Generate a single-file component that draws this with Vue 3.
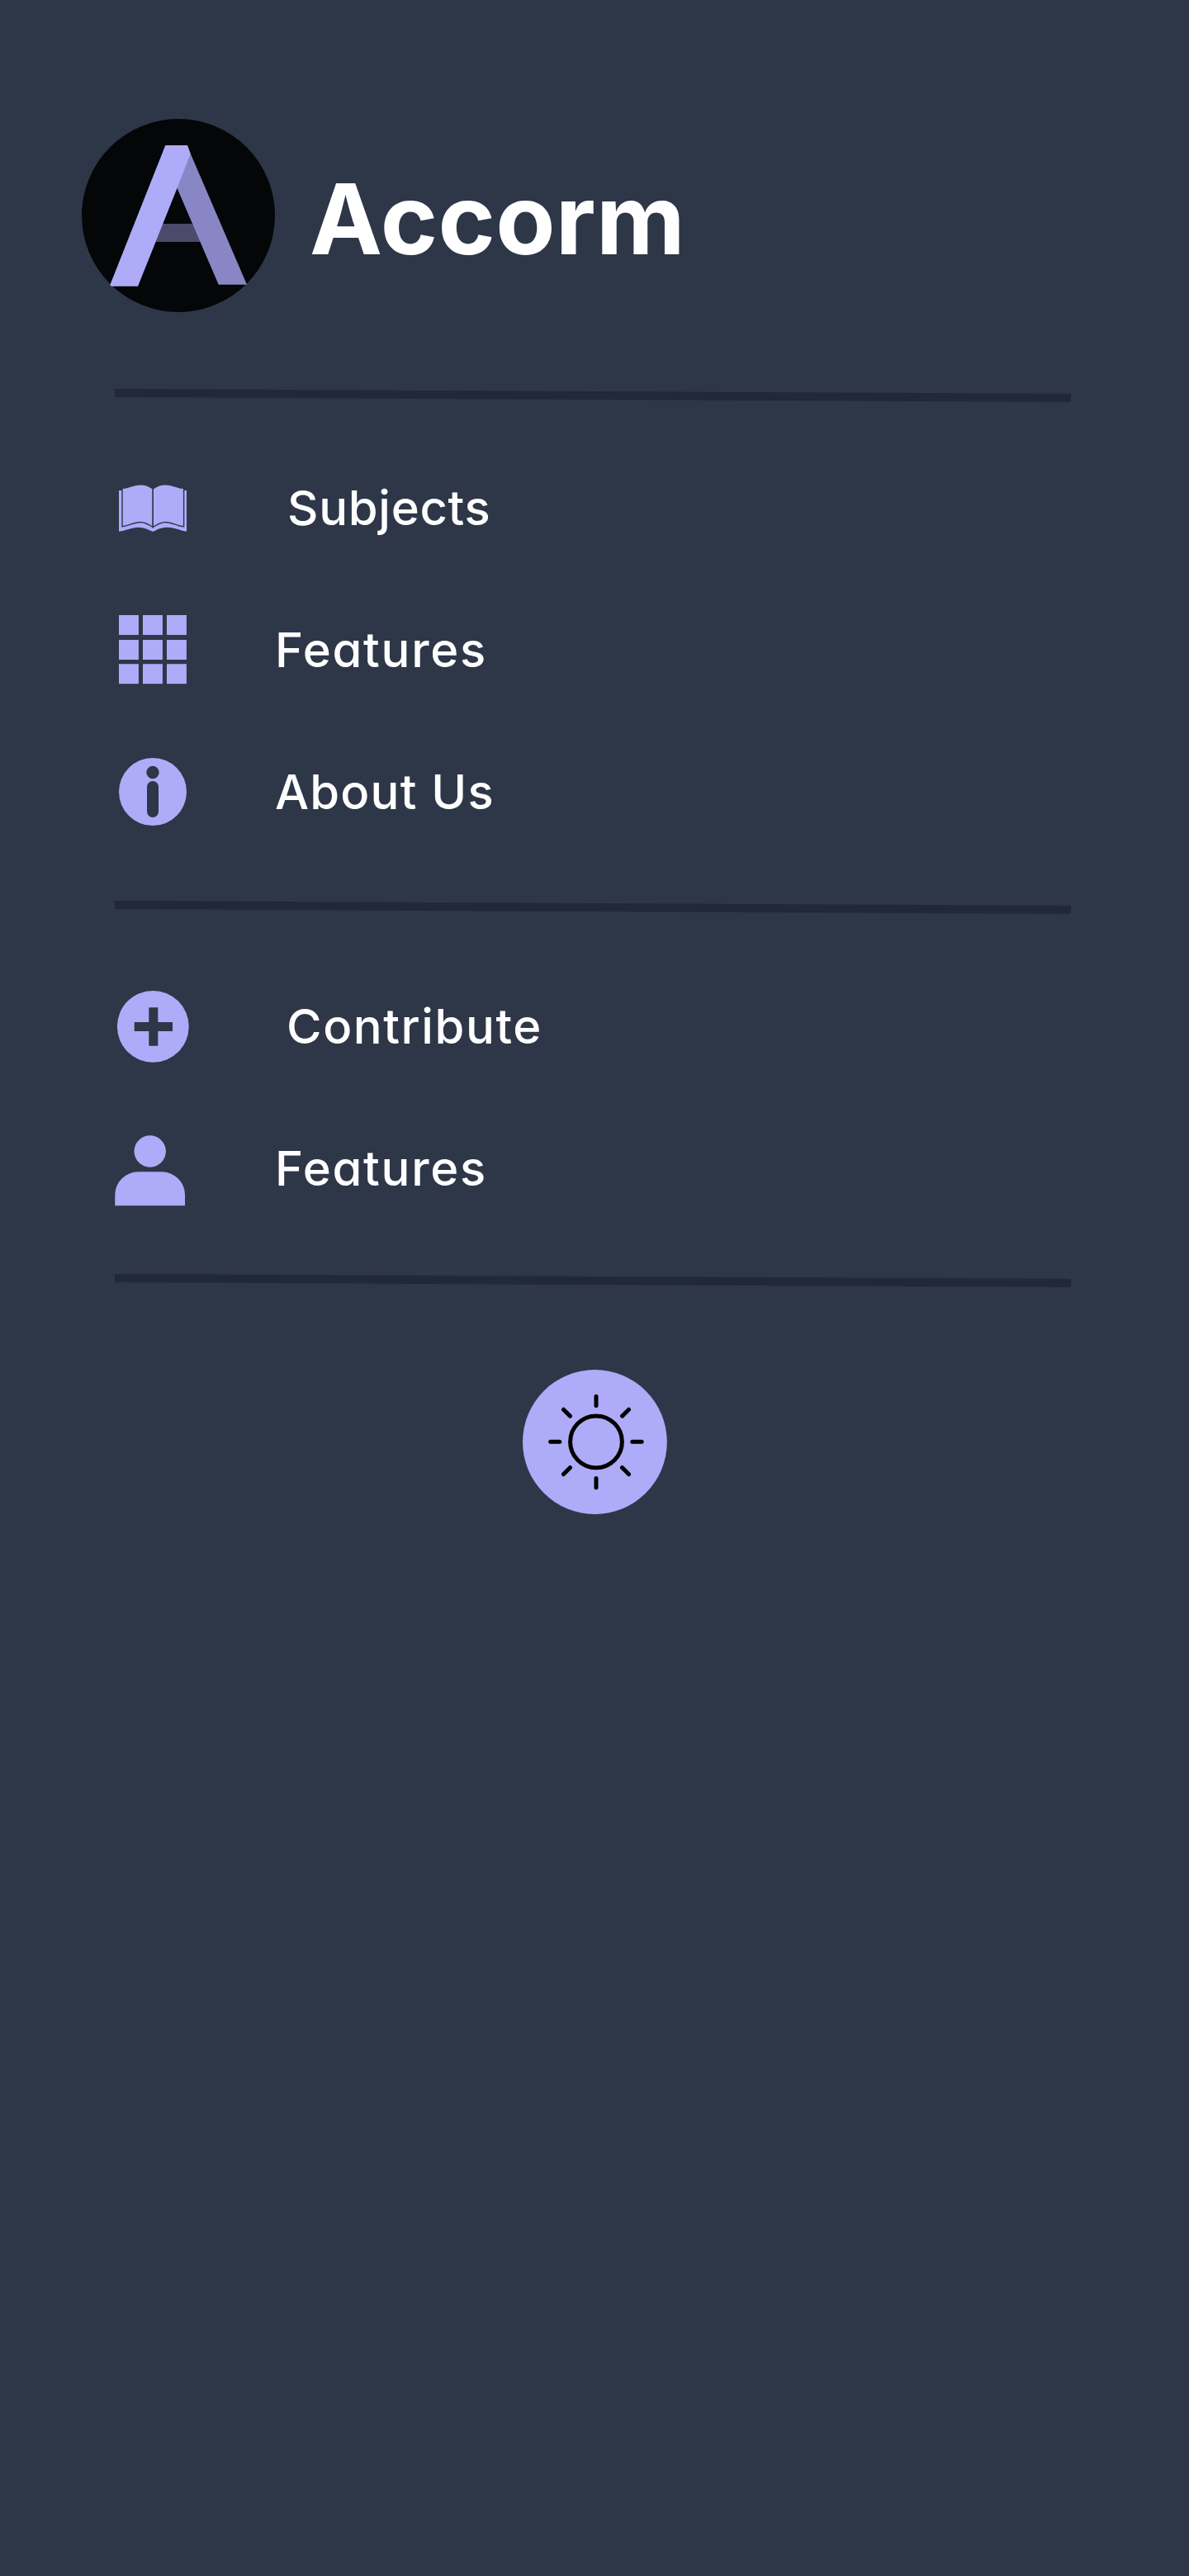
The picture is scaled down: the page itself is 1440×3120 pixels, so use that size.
<script setup>
const groups = [
  [
    { icon: 'book', label: 'Subjects', cls: 'subjects' },
    { icon: 'grid', label: 'Features', cls: 'features' },
    { icon: 'info', label: 'About Us', cls: 'about' },
  ],
  [
    { icon: 'plus', label: 'Contribute', cls: 'contribute' },
    { icon: 'user', label: 'Features', cls: 'features' },
  ],
]
const cells = [[10, 7], [39, 7], [68, 7], [10, 37], [39, 37], [68, 37], [10, 66.2], [39, 66.2], [68, 66.2]]
</script>

<template>
  <main class="menu">
    <header class="brand">
      <svg class="logo" viewBox="0 0 234 234">
        <circle cx="117" cy="117" r="117" fill="#040608" />
        <path d="M97.7 127H134L144.300 149H88.700Z" fill="#4c4a6b" />
        <path d="M132 42.700L200 200.700H165.700L115.300 83.300Z" fill="#8986c5" />
        <path d="M101.300 32H128L132 42.700L68 202.700H36L34.300 201Z" fill="#aeacf8" />
      </svg>
      <h1 class="title">Accorm</h1>
    </header>

    <template v-for="(group, g) in groups" :key="g">
      <svg class="divider" viewBox="0 0 1158 16"><path d="M0 0L1158 6V16L0 10Z" fill="#212838" /></svg>
      <nav class="group" :class="'group-' + g">
        <a v-for="item in group" :key="item.icon" class="row">
          <svg class="icon" viewBox="0 0 100 100" fill="#aeacf8">
            <g v-if="item.icon === 'book'">
              <path d="M10 28H92V77.700C85 77 78 72.700 69 72.700C61 72.700 57 75 51.200 77.900C45 75 40 72.700 33.500 72.700C25 72.700 18 77 10 77.700Z" />
              <path class="page" d="M14 25.400C22 25.400 27 20.700 36 20.700C42 20.700 47 22.500 51.200 26V72.500C46 69 41 66.500 36 66.500C27 66.500 22 71.500 14 71.700Z" />
              <path class="page" d="M88.600 25.400C80 25.400 76 20.700 66.600 20.700C60.500 20.700 55.500 22.500 51.200 26V72.500C56.500 69 61.500 66.500 66.600 66.500C75 66.500 80.500 71.500 88.600 71.700Z" />
            </g>
            <g v-else-if="item.icon === 'grid'">
              <rect v-for="(c, i) in cells" :key="i" :x="c[0]" :y="c[1]" width="23.900" height="24" />
            </g>
            <g v-else-if="item.icon === 'info'">
              <circle cx="51" cy="49" r="41" />
              <circle cx="51" cy="25.500" r="7.700" fill="#2d3748" />
              <rect x="44" y="36" width="14" height="44" rx="7" fill="#2d3748" />
            </g>
            <g v-else-if="item.icon === 'plus'">
              <circle cx="51.300" cy="49.300" r="43.400" />
              <path d="M46.300 26.300H57.300V44H75V55H57.300V72.700H46.300V55H28.700V44H46.300Z" fill="#2d3748" />
            </g>
            <g v-else>
              <circle cx="47.700" cy="28.500" r="19.200" />
              <path d="M5.300 94.300V81.300A28 28 0 0 1 33.300 53.300H62A28 28 0 0 1 90 81.300V94.300Z" />
            </g>
          </svg>
          <span class="label" :class="item.cls">{{ item.label }}</span>
        </a>
      </nav>
    </template>
    <svg class="divider" viewBox="0 0 1158 16"><path d="M0 0L1158 6V16L0 10Z" fill="#212838" /></svg>

    <button class="theme" aria-label="Toggle theme">
      <svg width="175" height="175" viewBox="0 0 175 175" fill="none" stroke="#000" stroke-width="5" stroke-linecap="round">
        <circle cx="87.400" cy="87.500" r="87.400" fill="#aeacf8" stroke="none" />
        <circle cx="89" cy="87.300" r="31.400" />
        <path d="M89 32.200V43.500M89 131.500V142.800M33.700 87.300H44.800M132.800 87.300H144.200M49.500 48.200L57.500 56.100M128.500 48.200L120.500 56.100M49.500 126.600L57.500 118.500M128.500 126.600L120.500 118.500" />
      </svg>
    </button>
  </main>
</template>

<style>
body {
  background: #2d3748;
}
</style>

<style scoped>
.menu {
  box-sizing: border-box;
  width: 1440px;
  height: 3120px;
  display: flex;
  flex-direction: column;
  background: #2d3748;
  color: #fff;
  font-family: Inter, "Liberation Sans", sans-serif;
}
.brand {
  box-sizing: border-box;
  height: 471px;
  flex: none;
  display: flex;
  align-items: flex-start;
  padding: 144px 0 0 99px;
}
.logo {
  width: 234px;
  height: 234px;
}
.title {
  margin: 50px 0 0 42px;
  font-size: 118px;
  line-height: 142px;
  font-weight: 700;
  letter-spacing: 0.3px;
}
.divider {
  flex: none;
  display: block;
  width: 1158px;
  height: 16px;
  margin-left: 139px;
}
.group {
  display: flex;
  flex-direction: column;
}
.group-0 {
  padding: 43px 0 45px;
}
.group-1 {
  padding: 51px 0 41px;
}
.row {
  height: 172px;
  display: flex;
  align-items: center;
  padding-left: 134px;
}
.icon {
  width: 100px;
  height: 100px;
  flex: none;
}
.page {
  stroke: #2d3748;
  stroke-width: 1.4;
}
.label {
  margin-top: -2px;
  font-size: 58px;
  line-height: 70px;
  font-weight: 500;
  font-feature-settings: "cv11";
  white-space: pre;
}
.subjects {
  margin-left: 114px;
  letter-spacing: 0.7px;
}
.features {
  margin-left: 99px;
  letter-spacing: 1.7px;
}
.about {
  margin-left: 99px;
  letter-spacing: 1.2px;
}
.contribute {
  margin-left: 113px;
  letter-spacing: 1.6px;
}
.theme {
  width: 175px;
  height: 175px;
  margin: 100px 0 0 633px;
  padding: 0;
  border: 0;
  background: none;
  line-height: 0;
}
</style>
